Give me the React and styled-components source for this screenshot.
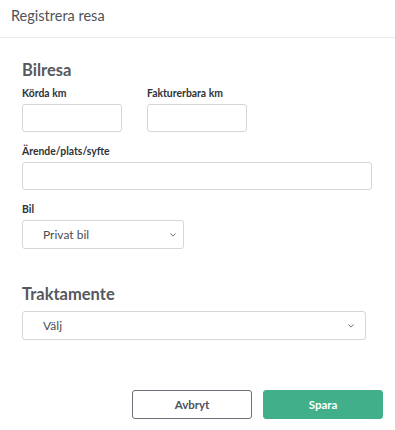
import React, { useState } from "react";
import styled, { createGlobalStyle } from "styled-components";

const GlobalStyle = createGlobalStyle`
  body {
    margin: 0;
    background: #ffffff;
    font-family: Lato, "Liberation Sans", sans-serif;
    color: #333;
  }
`;

const Chevron = () => (
  <svg width="6" height="4" viewBox="0 0 6 4" fill="none">
    <path d="M0.6 0.7l2.4 2.4 2.4-2.4" stroke="#6c7178" strokeWidth="1" strokeLinecap="round" strokeLinejoin="round" />
  </svg>
);

const App = () => {
  const [driven, setDriven] = useState("");
  const [billable, setBillable] = useState("");
  const [purpose, setPurpose] = useState("");

  return (
    <Page>
      <GlobalStyle />
      <Header>Registrera resa</Header>
      <Body>
        <Section>
          <SectionTitle>Bilresa</SectionTitle>
          <Row>
            <Field>
              <Label>Körda km</Label>
              <Input $w="100px" value={driven} onChange={(e) => setDriven(e.target.value)} />
            </Field>
            <Field>
              <Label>Fakturerbara km</Label>
              <Input $w="100px" value={billable} onChange={(e) => setBillable(e.target.value)} />
            </Field>
          </Row>
          <Field>
            <Label>Ärende/plats/syfte</Label>
            <Input $w="350px" value={purpose} onChange={(e) => setPurpose(e.target.value)} />
          </Field>
          <Field>
            <Label>Bil</Label>
            <Select $w="162px" $arrowGap="7px">
              <span>Privat bil</span>
              <Chevron />
            </Select>
          </Field>
        </Section>
        <Section $top="22px">
          <SectionTitle>Traktamente</SectionTitle>
          <Select $w="344px" $arrowGap="11px">
            <span>Välj</span>
            <Chevron />
          </Select>
        </Section>
      </Body>
      <Footer>
        <Button>Avbryt</Button>
        <Button $primary>Spara</Button>
      </Footer>
    </Page>
  );
};

const Page = styled.div`
  width: 395px;
  height: 430px;
  display: flex;
  flex-direction: column;
`;

const Header = styled.div`
  height: 38px;
  box-sizing: border-box;
  padding: 6px 11px 0;
  border-bottom: 1px solid #ebebeb;
  font-size: 14.5px;
  line-height: 20px;
  color: #4f5257;
`;

const Body = styled.div`
  padding: 22px 0 0 22px;
  display: flex;
  flex-direction: column;
`;

const Section = styled.div`
  display: flex;
  flex-direction: column;
  margin-top: ${(p) => p.$top || "0"};
`;

const SectionTitle = styled.div`
  font-size: 16.5px;
  font-weight: 700;
  line-height: 20px;
  color: #55585d;
  margin-bottom: 7px;
`;

const Row = styled.div`
  display: flex;
  gap: 25px;
`;

const Field = styled.div`
  display: flex;
  flex-direction: column;
  margin-bottom: 13px;
`;

const Label = styled.label`
  font-size: 10.4px;
  font-weight: 700;
  line-height: 12px;
  color: #2f3236;
  margin-bottom: 5px;
`;

const Input = styled.input`
  width: ${(p) => p.$w};
  height: 28px;
  box-sizing: border-box;
  border: 1px solid #d3d6da;
  border-radius: 3px;
  padding: 0 8px;
  outline: none;
  font-family: inherit;
  font-size: 12px;
`;

const Select = styled.div`
  width: ${(p) => p.$w};
  height: 29px;
  box-sizing: border-box;
  border: 1px solid #d3d6da;
  border-radius: 3px;
  padding: 0 ${(p) => p.$arrowGap} 0 20px;
  display: flex;
  align-items: center;
  justify-content: space-between;
  font-size: 12px;
  color: #4a4d52;
  cursor: pointer;
`;

const Footer = styled.div`
  margin-top: auto;
  padding: 0 12px 11px 0;
  display: flex;
  justify-content: flex-end;
  gap: 11px;
`;

const Button = styled.button`
  width: 120px;
  height: 29px;
  box-sizing: border-box;
  border-radius: 3px;
  font-family: inherit;
  font-size: 11.5px;
  font-weight: 700;
  cursor: pointer;
  border: 1px solid ${(p) => (p.$primary ? "#41b08a" : "#6b7078")};
  background: ${(p) => (p.$primary ? "#41b08a" : "#ffffff")};
  color: ${(p) => (p.$primary ? "#ffffff" : "#4e5259")};
`;

export default App;
